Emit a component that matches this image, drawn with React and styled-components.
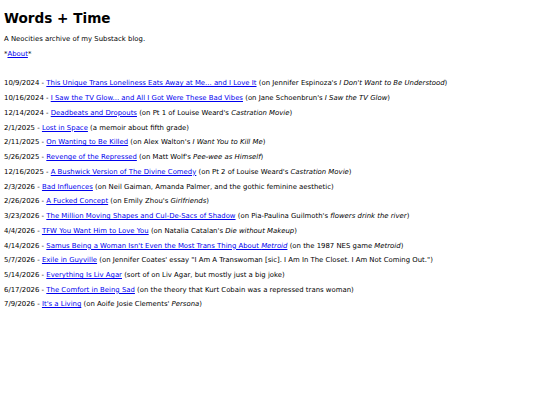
import React from 'react';
import styled, { createGlobalStyle } from 'styled-components';

const GlobalStyle = createGlobalStyle`
    html, body {
        margin: 0;
        padding: 0;
        background: #fff;
    }
`;

const entries = [
    {date: '10/9/2024', title: 'This Unique Trans Loneliness Eats Away at Me... and I Love It', note: <>on Jennifer Espinoza's <em>I Don't Want to Be Understood</em></>},
    {date: '10/16/2024', title: 'I Saw the TV Glow... and All I Got Were These Bad Vibes', note: <>on Jane Schoenbrun's <em>I Saw the TV Glow</em></>},
    {date: '12/14/2024', title: 'Deadbeats and Dropouts', note: <>on Pt 1 of Louise Weard's <em>Castration Movie</em></>},
    {date: '2/1/2025', title: 'Lost in Space', note: <>a memoir about fifth grade</>},
    {date: '2/11/2025', title: 'On Wanting to Be Killed', note: <>on Alex Walton's <em>I Want You to Kill Me</em></>},
    {date: '5/26/2025', title: 'Revenge of the Repressed', note: <>on Matt Wolf's <em>Pee-wee as Himself</em></>},
    {date: '12/16/2025', title: 'A Bushwick Version of The Divine Comedy', note: <>on Pt 2 of Louise Weard's <em>Castration Movie</em></>},
    {date: '2/3/2026', title: 'Bad Influences', note: <>on Neil Gaiman, Amanda Palmer, and the gothic feminine aesthetic</>},
    {date: '2/26/2026', title: 'A Fucked Concept', note: <>on Emily Zhou's <em>Girlfriends</em></>},
    {date: '3/23/2026', title: 'The Million Moving Shapes and Cul-De-Sacs of Shadow', note: <>on Pia-Paulina Guilmoth's <em>flowers drink the river</em></>},
    {date: '4/4/2026', title: 'TFW You Want Him to Love You', note: <>on Natalia Catalan's <em>Die without Makeup</em></>},
    {date: '4/14/2026', title: <>Samus Being a Woman Isn't Even the Most Trans Thing About <em>Metroid</em></>, note: <>on the 1987 NES game <em>Metroid</em></>},
    {date: '5/7/2026', title: 'Exile in Guyville', note: <>on Jennifer Coates' essay "I Am A Transwoman [sic]. I Am In The Closet. I Am Not Coming Out."</>},
    {date: '5/14/2026', title: 'Everything Is Liv Agar', note: <>sort of on Liv Agar, but mostly just a big joke</>},
    {date: '6/17/2026', title: 'The Comfort in Being Sad', note: <>on the theory that Kurt Cobain was a repressed trans woman</>},
    {date: '7/9/2026', title: "It's a Living", note: <>on Aoife Josie Clements' <em>Persona</em></>},
];

export default function App() {
    return (
        <Page>
            <GlobalStyle />
            <Title>Words + Time</Title>
            <Line>A Neocities archive of my Substack blog.</Line>
            <Line>*<Link href='#'>About</Link>*</Line>
            <Archive>
                {entries.map(entry => (
                    <Line key={entry.date}>
                        {entry.date} - <Link href='#'>{entry.title}</Link> ({entry.note})
                    </Line>
                ))}
            </Archive>
        </Page>
    );
}

const Page = styled.div`
    padding: 8px 4px;
    font-family: "DejaVu Sans", Verdana, sans-serif;
    font-size: 6.92px;
    color: #000;
`;

const Title = styled.h1`
    margin: 0 0 4px 0;
    font-size: 13.6px;
    line-height: 20px;
    font-weight: bold;
`;

const Line = styled.p`
    margin: 0;
    line-height: 14.73px;
    white-space: nowrap;

    em {
        font-style: italic;
    }
`;

const Archive = styled.div`
    margin-top: 15px;
    display: flex;
    flex-direction: column;
`;

const Link = styled.a`
    color: #0000ee;
    text-decoration: underline;
`;
